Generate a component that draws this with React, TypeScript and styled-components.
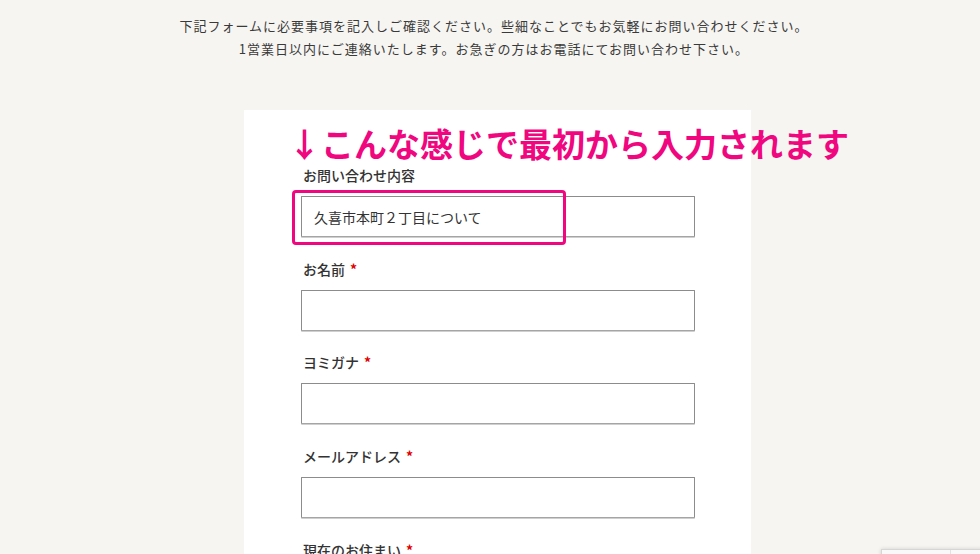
import React from "react";
import styled, { createGlobalStyle } from "styled-components";

const Global = createGlobalStyle`
  html, body { margin: 0; padding: 0; }
  body {
    background: #f6f5f1;
    overflow: hidden;
    font-family: "Noto Sans CJK JP", "Noto Sans", sans-serif;
    color: #333;
  }
`;

const Page = styled.div`
  width: 980px;
  height: 554px;
  overflow: hidden;
  display: flex;
  flex-direction: column;
`;

const Intro = styled.div`
  padding: 14px 0 0 8px;
  text-align: center;
  font-size: 13px;
  line-height: 23px;
  letter-spacing: 1px;
  color: #3a3a3a;
`;

const Panel = styled.section`
  position: relative;
  margin: 50px 0 0 244px;
  width: 507px;
  flex: 1;
  background: #fff;
  padding: 55px 56px 0 57px;
  box-sizing: border-box;
  display: flex;
  flex-direction: column;
  gap: 21.7px;
`;

const Callout = styled.div`
  position: absolute;
  left: 44px;
  top: 17px;
  white-space: nowrap;
  font-size: 33px;
  line-height: 33px;
  font-weight: 700;
  color: #f0067f;
`;

const Field = styled.div`
  display: flex;
  flex-direction: column;
  gap: 11px;
`;

const Label = styled.label`
  padding-left: 2px;
  font-size: 14px;
  line-height: 20px;
  font-weight: 500;
  color: #333;
`;

const Req = styled.span`
  margin-left: 5px;
  color: #e00000;
  font-weight: 700;
`;

const InputWrap = styled.div`
  position: relative;
  width: 394px;
`;

const Input = styled.input`
  display: block;
  width: 394px;
  height: 41px;
  box-sizing: border-box;
  border: 1px solid #8c8c8c;
  border-bottom-color: #a5a5a5;
  box-shadow: 0 1px 0 #cfcfcf;
  background: #fff;
  padding: 0 12px;
  font-family: "Noto Sans CJK JP", sans-serif;
  font-size: 14px;
  color: #333;
  outline: none;
  border-radius: 1px;
`;

const Highlight = styled.div`
  position: absolute;
  left: -9px;
  top: -6px;
  width: 274px;
  height: 55px;
  box-sizing: border-box;
  border: 3px solid #f0067f;
  border-radius: 4px;
  pointer-events: none;
`;

const Badge = styled.div`
  position: fixed;
  left: 881px;
  top: 549px;
  width: 256px;
  height: 60px;
  background: #f9f9f9;
  border: 1px solid #d6d6d6;
  box-shadow: 0 0 4px rgba(0, 0, 0, 0.15);
  display: flex;
`;

const BadgeLogo = styled.div`
  width: 68px;
  border-right: 1px solid #e2e2e2;
`;

const fields = [
  { label: "お名前", req: true },
  { label: "ヨミガナ", req: true },
  { label: "メールアドレス", req: true },
  { label: "現在のお住まい", req: true },
];

export default function App() {
  return (
    <Page>
      <Global />
      <Intro>
        下記フォームに必要事項を記入しご確認ください。些細なことでもお気軽にお問い合わせください。
        <br />
        1営業日以内にご連絡いたします。お急ぎの方はお電話にてお問い合わせ下さい。
      </Intro>
      <Panel>
        <Callout>↓こんな感じで最初から入力されます</Callout>
        <Field>
          <Label>お問い合わせ内容</Label>
          <InputWrap>
            <Input defaultValue="久喜市本町２丁目について" />
            <Highlight />
          </InputWrap>
        </Field>
        {fields.map((f) => (
          <Field key={f.label}>
            <Label>
              {f.label}
              {f.req && <Req>*</Req>}
            </Label>
            <InputWrap>
              <Input />
            </InputWrap>
          </Field>
        ))}
      </Panel>
      <Badge>
        <BadgeLogo />
      </Badge>
    </Page>
  );
}
